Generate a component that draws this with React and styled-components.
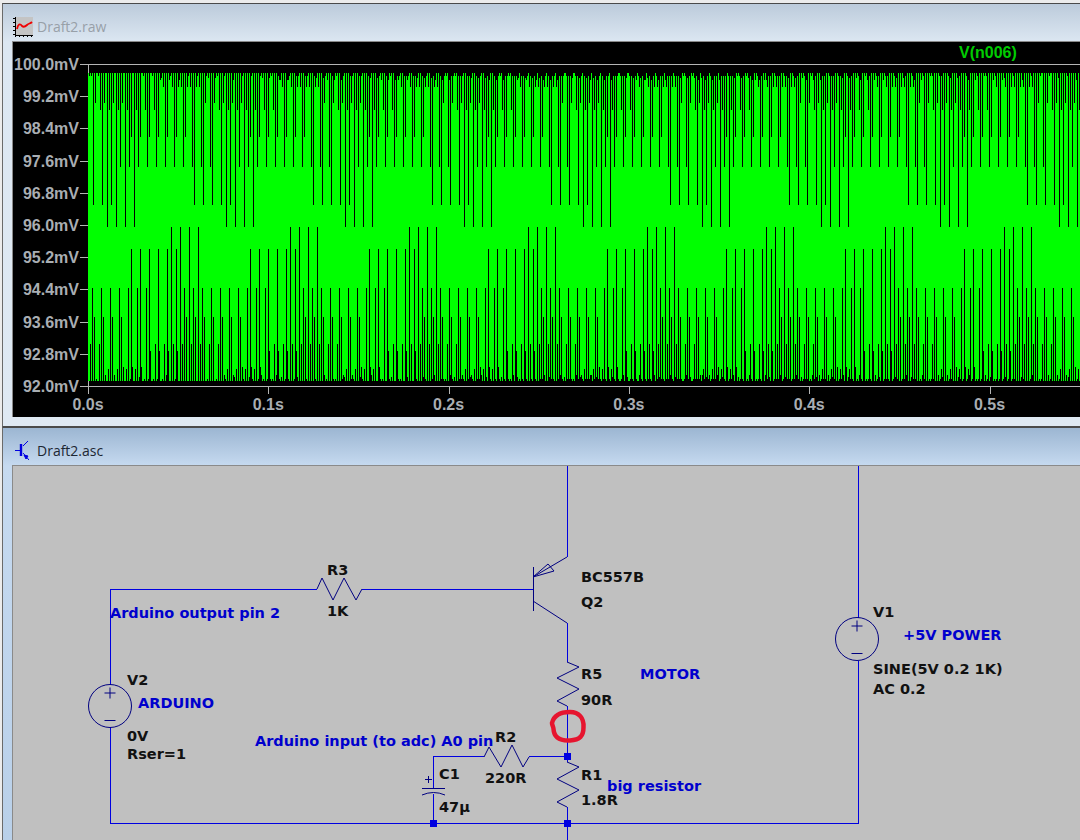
import React from "react";
import styled, { createGlobalStyle } from "styled-components";

const GlobalStyle = createGlobalStyle`
	html, body {
		margin: 0;
		padding: 0;
		background: #f0f0f0;
	}
`;

const Desktop = styled.div`
	width: 1080px;
	height: 840px;
	overflow: hidden;
	display: flex;
	flex-direction: column;
	padding: 3px 0 0 2px;
	box-sizing: border-box;
	background: #ececec;
`;

const Window = styled.section`
	flex: none;
	border-top: 1px solid #4a4a4a;
	border-left: 1px solid #6a6a6a;
	border-bottom: ${(p) => (p.$active ? "0" : "1px solid #4a4a4a")};
	padding: 0 0 ${(p) => (p.$active ? "0" : "9px")} 9px;
	background: ${(p) =>
		p.$active
			? "linear-gradient(#9cb6d2, #c6daf0 38px, #b9d0e9)"
			: "linear-gradient(#bccbdb, #dce7f2 38px, #dfe9f3)"};
`;

const TitleBar = styled.header`
	height: 37px;
	box-sizing: border-box;
	padding: 8px 0 0 ${(p) => (p.$active ? "3px" : "1px")};
	display: flex;
	align-items: center;
	gap: ${(p) => (p.$active ? "8px" : "4px")};
	font: 14px "Open Sans", sans-serif;
	color: ${(p) => (p.$active ? "#1c2733" : "#98a0a8")};
`;

const IconSlot = styled.span`
	width: ${(p) => (p.$active ? "14px" : "20px")};
	height: 20px;
	display: block;
	svg {
		display: block;
	}
`;

const Pane = styled.div`
	border-top: 1px solid #8a8a8a;
	border-left: 1px solid #8a8a8a;
	height: ${(p) => p.$height}px;
	overflow: hidden;
	background: ${(p) => p.$bg};
	svg {
		display: block;
	}
`;

const AxisLabel = styled.text`
	font: bold 16px "Liberation Sans", Arial, sans-serif;
	fill: #a9aeb3;
`;

const Legend = styled.text`
	font: bold 16px "Liberation Sans", Arial, sans-serif;
	fill: #00cc00;
`;

const NetLabel = styled.text`
	font: bold 14.5px "DejaVu Sans", sans-serif;
	fill: ${(p) => (p.$note ? "#0000cd" : "#111111")};
`;

const WIRE = "#0000e0";
const BODY = "#000080";

const yTicks = [
	["100.0mV", 64],
	["99.2mV", 96],
	["98.4mV", 128],
	["97.6mV", 161],
	["96.8mV", 193],
	["96.0mV", 225],
	["95.2mV", 257],
	["94.4mV", 289],
	["93.6mV", 322],
	["92.8mV", 354],
	["92.0mV", 386],
];

const xTicks = [0, 1, 2, 3, 4, 5].map((n) => [`0.${n}s`, 88 + n * 180.3]);

// spike groups of the aliased trace: [first x, lines in a group, y where it stops]
const topGroups = [
	[107.3, 4, 227],
	[75.3, 5, 205],
	[120.3, 11, 167],
	[131.3, 7, 137],
	[100, 7, 110],
	[86, 5, 103],
	[163, 5, 87],
	[178, 3, 87],
	[160.3, 3, 80],
];

const bottomGroups = [
	[171.3, 4, 227],
	[130.7, 6, 249],
	[65.3, 10, 288],
	[67.3, 7, 317],
	[36.3, 8, 344],
	[31.3, 4, 351],
	[123.3, 3, 367],
	[99.3, 5, 369],
	[105, 3, 375],
];

const TOP = 73;
const BOTTOM = 381;
const STEP = 9;
const BEAT = 119;

function spikes() {
	let d = "";
	const line = (x, y1, y2) => {
		const px = Math.round(x);
		if (px < 89 || px > 1080) return;
		d += `M${px + 0.5} ${y1}V${y2}`;
	};
	// short teeth everywhere, four phases per step
	const topDepth = [3, 3, 5, 3, 7, 3];
	const bottomDepth = [2, 2, 4, 2, 2, 6, 2];
	let i = 0;
	for (let x = 89.3; x < 1080; x += STEP) {
		[0, 1.7, 4, 6].forEach((off, j) => {
			line(x + off, TOP, TOP + topDepth[(i + j) % topDepth.length]);
			line(x + 1 + off, BOTTOM, BOTTOM - bottomDepth[(i + j * 2) % bottomDepth.length]);
		});
		i++;
	}
	for (let k = 0; k < 10; k++) {
		topGroups.forEach(([start, count, end]) => {
			for (let n = 0; n < count; n++) line(start + k * BEAT + n * STEP, TOP, end);
		});
		bottomGroups.forEach(([start, count, end]) => {
			for (let n = 0; n < count; n++) line(start + k * BEAT + n * STEP, BOTTOM, end);
		});
	}
	return d;
}

function Plot() {
	return (
		<svg width="1067" height="375" viewBox="13 42 1067 375">
			<rect x="88" y={TOP} width="992" height={BOTTOM - TOP} fill="#00ff00" />
			<path d={spikes()} stroke="#000" strokeWidth="1" fill="none" shapeRendering="crispEdges" />
			<path
				d="M88.5 64V73M88.5 381V386M80 64.5H1080M80 386.5H1080"
				stroke="#b4b4b4"
				fill="none"
				shapeRendering="crispEdges"
			/>
			{yTicks.map(([label, y]) => (
				<g key={label}>
					<path d={`M80 ${y + 0.5}H88`} stroke="#b4b4b4" shapeRendering="crispEdges" />
					<AxisLabel x="79" y={y + 6} textAnchor="end">
						{label}
					</AxisLabel>
				</g>
			))}
			{xTicks.map(([label, x]) => (
				<g key={label}>
					<path d={`M${Math.round(x) + 0.5} 386V394`} stroke="#b4b4b4" shapeRendering="crispEdges" />
					<AxisLabel x={x} y="410" textAnchor="middle">
						{label}
					</AxisLabel>
				</g>
			))}
			<Legend x="959" y="58">
				V(n006)
			</Legend>
		</svg>
	);
}

function Source({ x, y }) {
	return (
		<g stroke={BODY} fill="none">
			<circle cx={x} cy={y} r="21.5" />
			<path d={`M${x - 5.5} ${y - 13}H${x + 5.5}M${x} ${y - 18.5}V${y - 7.5}M${x - 5.5} ${y + 14.5}H${x + 5.5}`} />
		</g>
	);
}

function Schematic() {
	return (
		<svg width="1067" height="374" viewBox="13 466 1067 374">
			{/* wires */}
			<path
				d="M567.5 466V557M567.5 623V662M567.5 706V757M567.5 757V762M567.5 807V840
				M110.5 685V589.5H317M362 589.5H533M110.5 727V823.5H858M858.5 466V618M858.5 661V823.5
				M484 756.5H433.5V788M433.5 794V823.5M529 756.5H567"
				stroke={WIRE}
				fill="none"
				shapeRendering="crispEdges"
			/>
			{/* symbols */}
			<g stroke={BODY} fill="none">
				<path d="M533.5 567V611" shapeRendering="crispEdges" />
				<path d="M533 577L567 557M533 601L567 623" />
				<path d="M533 577L548 564L554 571Z" />
				<path d="M567 662L579 667L557 678L579 689L557 701L567 706" />
				<path d="M567 762L579 767L557 779L579 790L557 802L567 807" />
				<path d="M484 757L489 747L501 767L512 745L523 767L529 757" />
				<path d="M317 589L322 578L333 600L344 578L356 600L362 589" />
				<path d="M422 788.5H445" shapeRendering="crispEdges" />
				<path d="M422 795Q433.5 790 445 795" />
				<path d="M425 779.5H432M428.5 776V783" />
			</g>
			<Source x={110} y={706} />
			<Source x={857} y={639} />
			{/* junctions */}
			<rect x="564" y="753" width="7" height="7" fill={WIRE} />
			<rect x="564" y="820" width="7" height="7" fill={WIRE} />
			<rect x="430" y="820" width="7" height="7" fill={WIRE} />
			{/* marker drawn over the screenshot */}
			<path
				d="M552 723C554 715 561 712 570 712C579 712 584 718 583.5 727C583.5 736 580 740 570 740.5C560 741 554 738 553.5 729C553.5 727 552 725 552 723Z"
				fill="none"
				stroke="#e6152f"
				strokeWidth="4.5"
			/>
			<NetLabel x="327" y="575">R3</NetLabel>
			<NetLabel x="327" y="616">1K</NetLabel>
			<NetLabel x="581" y="582">BC557B</NetLabel>
			<NetLabel x="581" y="607">Q2</NetLabel>
			<NetLabel x="581" y="679">R5</NetLabel>
			<NetLabel x="581" y="705">90R</NetLabel>
			<NetLabel x="495" y="742">R2</NetLabel>
			<NetLabel x="485" y="783">220R</NetLabel>
			<NetLabel x="581" y="780">R1</NetLabel>
			<NetLabel x="581" y="805">1.8R</NetLabel>
			<NetLabel x="127" y="685">V2</NetLabel>
			<NetLabel x="127" y="741">0V</NetLabel>
			<NetLabel x="127" y="759">Rser=1</NetLabel>
			<NetLabel x="439" y="779">C1</NetLabel>
			<NetLabel x="439" y="812">47µ</NetLabel>
			<NetLabel x="873" y="617">V1</NetLabel>
			<NetLabel x="873" y="674">SINE(5V 0.2 1K)</NetLabel>
			<NetLabel x="873" y="694">AC 0.2</NetLabel>
			<NetLabel $note x="640" y="679">MOTOR</NetLabel>
			<NetLabel $note x="607" y="791">big resistor</NetLabel>
			<NetLabel $note x="138" y="708">ARDUINO</NetLabel>
			<NetLabel $note x="110" y="618">Arduino output pin 2</NetLabel>
			<NetLabel $note x="255" y="746">Arduino input (to adc) A0 pin</NetLabel>
			<NetLabel $note x="903" y="640">+5V POWER</NetLabel>
		</svg>
	);
}

const WaveIcon = () => (
	<svg width="20" height="20" viewBox="0 0 20 20">
		<rect x="2" y="0" width="18" height="18" fill="#c4c4c4" />
		<path
			d="M2 1H0M2 5H0M2 9H0M2 13H0M2 17H0M2 0V20M2 18.5H20M6 18V20M10 18V20M14 18V20M18 18V20"
			stroke="#000"
			fill="none"
			shapeRendering="crispEdges"
		/>
		<path d="M4 12C5 7 7 6 9 9C11 11 13 9 14 8C16 6 17 7 19 5" stroke="#f00000" strokeWidth="1.8" fill="none" />
	</svg>
);

const TransistorIcon = () => (
	<svg width="14" height="20" viewBox="0 0 14 20">
		<g stroke="#0000e0" fill="none">
			<path d="M0 9.5H5" />
			<path d="M6 3V15" strokeWidth="2.4" />
			<path d="M8 5L13 0M8 12L14 19" />
		</g>
		<path d="M9 14L13 15L11 18Z" fill="#0000e0" stroke="#0000e0" />
	</svg>
);

export default function App() {
	return (
		<Desktop>
			<GlobalStyle />
			<Window>
				<TitleBar>
					<IconSlot>
						<WaveIcon />
					</IconSlot>
					Draft2.raw
				</TitleBar>
				<Pane $height={375} $bg="#000">
					<Plot />
				</Pane>
			</Window>
			<Window $active>
				<TitleBar $active>
					<IconSlot $active>
						<TransistorIcon />
					</IconSlot>
					Draft2.asc
				</TitleBar>
				<Pane $height={374} $bg="#c0c0c0">
					<Schematic />
				</Pane>
			</Window>
		</Desktop>
	);
}
